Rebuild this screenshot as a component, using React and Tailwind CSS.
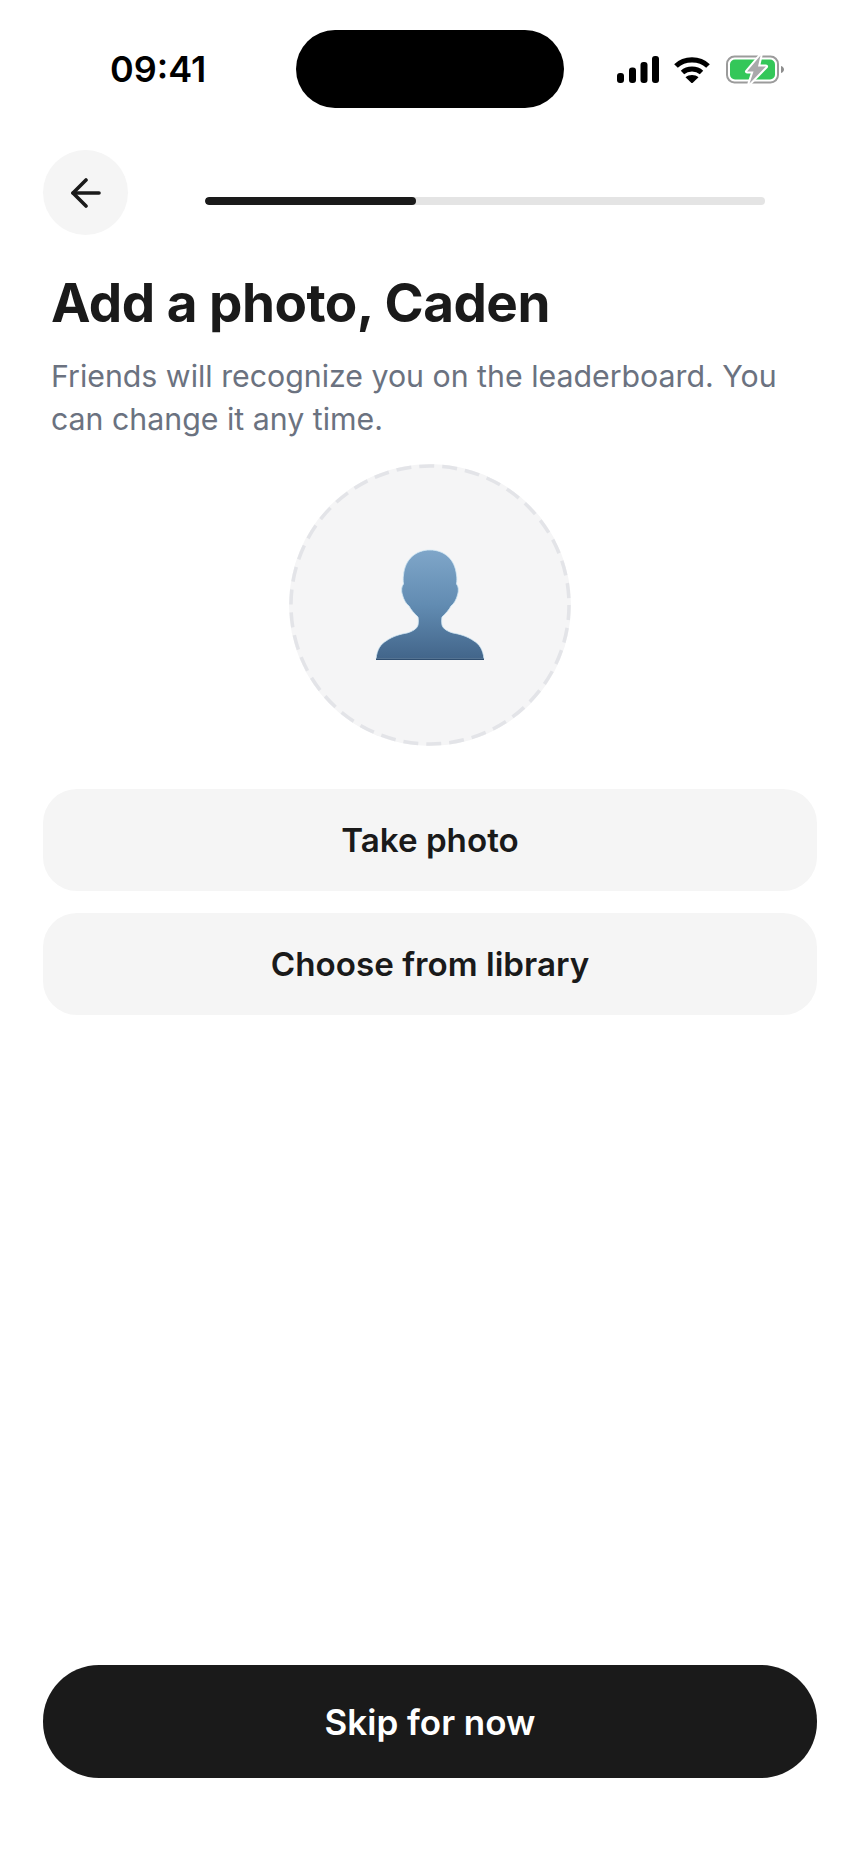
import { useId } from "react";

const SignalIcon = () => (
  <svg width="42" height="27" viewBox="0 0 42 27" fill="#000">
    <rect x="0" y="17" width="7" height="10" rx="3" />
    <rect x="12" y="11.5" width="7" height="15.5" rx="3" />
    <rect x="23.5" y="6" width="7" height="21" rx="3" />
    <rect x="35" y="0" width="7" height="27" rx="3" />
  </svg>
);

const WifiIcon = () => (
  <svg width="36" height="27" viewBox="0 0 36 27" fill="none">
    <path d="M2 10C10.500 1.700 25.500 1.700 34 10" stroke="#000" strokeWidth="5.200" />
    <path d="M8.500 16.500C13.500 11.800 22.500 11.800 27.500 16.500" stroke="#000" strokeWidth="5" />
    <path d="M11.500 21.200C15 18.400 21 18.400 24.500 21.200L18 27.500Z" fill="#000" />
  </svg>
);

const BatteryIcon = () => (
  <svg width="58" height="29" viewBox="0 0 58 29" fill="none">
    <rect x="1" y="1.500" width="51" height="26" rx="7.500" stroke="#9b9b9b" strokeWidth="2" />
    <rect x="4" y="4.500" width="45" height="20" rx="5" fill="#34c759" />
    <path d="M55 11C57 11.600 58 13 58 14.500C58 16 57 17.400 55 18Z" fill="#8e8e8e" />
    <path
      d="M34.500 0.500L21 16.500H27.500L23.500 28.500L40 11.500H32Z"
      fill="#a9a9ab"
      stroke="#fff"
      strokeWidth="4"
      strokeLinejoin="round"
      paintOrder="stroke"
    />
  </svg>
);

const BackArrow = () => (
  <svg width="32" height="30" viewBox="0 0 32 30" fill="none" stroke="#1a1a1a" strokeWidth="3.600" strokeLinecap="round" strokeLinejoin="round">
    <path d="M29 15H3" />
    <path d="M16 2L3 15L16 28" />
  </svg>
);

const DashedRing = () => (
  <svg className="absolute inset-0" width="282" height="282" viewBox="0 0 282 282" fill="none">
    <circle cx="141" cy="141" r="139" stroke="#e3e4e8" strokeWidth="3.500" strokeDasharray="15 8" />
  </svg>
);

const PersonIcon = () => {
  const id = useId();
  return (
    <svg width="110" height="112" viewBox="0 0 110 112" fill="none">
      <defs>
        <linearGradient id={id} x1="0" y1="0" x2="0" y2="1">
          <stop offset="0" stopColor="#7fa6c9" />
          <stop offset="0.5" stopColor="#628cb2" />
          <stop offset="1" stopColor="#42658a" />
        </linearGradient>
      </defs>
      <path
        d="M1 110C2 100 6 95 11 92C18 87 26 85 32 84C37 82.500 42 80 43 76C43.500 73 43.500 71 43 68C39 64 36 61 34 57C31 55 28.500 50 27.500 46C26 42 26.500 37 28.500 35C28 31 28 29 28.500 26C30 10 41 1 55 1C69 1 80 10 81.500 26C82 29 82 31 81.500 35C83.500 37 84 42 82.500 46C81.500 50 79 55 76 57C74 61 71 64 67 68C66.500 71 66.500 73 67 76C68 80 73 82.500 78 84C84 85 92 87 99 92C104 95 108 100 109 110Z"
        fill={`url(#${id})`}
        stroke="#d3e9f5"
        strokeWidth="0.800"
      />
      <rect x="1" y="109.500" width="108" height="1.500" fill="#2f4e70" />
    </svg>
  );
};

export default function App() {
  return (
    <div
      className="w-[860px] h-[1869px] flex flex-col bg-white text-[#1a1a1a]"
      style={{ fontFamily: "Inter, 'Liberation Sans', sans-serif" }}
    >
      <div className="flex items-center pt-[30px]">
        <div className="w-[296px] pl-[110px] text-[36px] leading-[78px] font-semibold text-black">09:41</div>
        <div className="w-[268px] h-[78px] rounded-[39px] bg-black" />
        <div className="flex items-center pl-[53px]">
          <SignalIcon />
          <div className="ml-[15px] flex">
            <WifiIcon />
          </div>
          <div className="ml-[16px] flex">
            <BatteryIcon />
          </div>
        </div>
      </div>

      <div className="flex items-start mt-[42px] px-[43px]">
        <button className="w-[85px] h-[85px] rounded-full bg-[#f5f5f5] flex items-center justify-center">
          <BackArrow />
        </button>
        <div className="ml-[77px] mt-[47px] w-[560px] h-[8px] rounded-full bg-[#e4e4e4] overflow-hidden">
          <div className="w-[211px] h-full rounded-full bg-[#1a1a1a]" />
        </div>
      </div>

      <h1 className="mt-[36px] pl-[51px] text-[53px] leading-[64px] font-bold tracking-[-0.5px]">Add a photo, Caden</h1>
      <p className="mt-[20px] pl-[51px] pr-[40px] text-[30.300px] leading-[43px] text-[#6b7280]">
        Friends will recognize you on the leaderboard. You can change it any time.
      </p>

      <div className="mt-[23px] flex justify-center">
        <div className="relative w-[282px] h-[282px] rounded-full bg-[#f5f5f6] flex items-center justify-center">
          <DashedRing />
          <PersonIcon />
        </div>
      </div>

      <div className="mt-[43px] px-[43px] flex flex-col gap-[22px]">
        <button className="h-[102px] pt-[2px] rounded-[34px] bg-[#f5f5f5] text-[33.200px] font-semibold">Take photo</button>
        <button className="h-[102px] pt-[2px] rounded-[34px] bg-[#f5f5f5] text-[33.200px] font-semibold">Choose from library</button>
      </div>

      <div className="mt-auto px-[43px] pb-[91px]">
        <button className="w-full h-[113px] pt-[2px] rounded-[56px] bg-[#1a1a1a] text-white text-[35px] font-semibold">
          Skip for now
        </button>
      </div>
    </div>
  );
}
